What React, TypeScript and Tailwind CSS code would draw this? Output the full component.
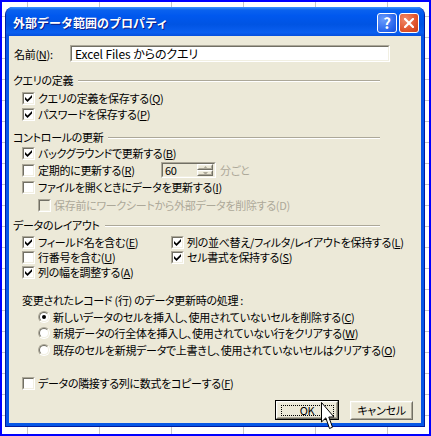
import React from 'react'

const sunkenOuter = 'border border-t-[#aca899] border-l-[#aca899] border-b-white border-r-white'
const sunkenInner = 'border border-t-[#716f64] border-l-[#716f64] border-b-[#f1efe2] border-r-[#f1efe2]'
const raisedOuter = 'border border-t-white border-l-white border-b-[#716f64] border-r-[#716f64]'
const raisedInner = 'border border-t-[#f1efe2] border-l-[#f1efe2] border-b-[#aca899] border-r-[#aca899]'

function Mn({ c }: { c: string }) {
  return (
    <>
      (<u className="underline-offset-[1px]">{c}</u>)
    </>
  )
}

function CheckBox({ checked = false, disabled = false }: { checked?: boolean; disabled?: boolean }) {
  return (
    <span className={`inline-flex h-[13px] w-[13px] shrink-0 ${sunkenOuter}`}>
      <span
        className={`flex h-full w-full items-center justify-center ${sunkenInner} ${
          disabled ? 'bg-[#ece9d8]' : 'bg-white'
        }`}
      >
        {checked && (
          <svg width="7" height="7" viewBox="0 0 7 7">
            <polygon points="0,2 2.5,4.5 7,0 7,2.5 2.5,7 0,4.5" fill="black" />
          </svg>
        )}
      </span>
    </span>
  )
}

function Radio({ checked = false }: { checked?: boolean }) {
  return (
    <span className={`inline-flex h-[12px] w-[12px] shrink-0 rounded-full ${sunkenOuter}`}>
      <span className={`flex h-full w-full items-center justify-center rounded-full bg-white ${sunkenInner}`}>
        {checked && <span className="h-[4px] w-[4px] rounded-full bg-black" />}
      </span>
    </span>
  )
}

function CheckRow({
  label,
  checked,
  className = 'h-[16px] pl-[9px]',
}: {
  label: React.ReactNode
  checked?: boolean
  className?: string
}) {
  return (
    <div className={`flex items-center gap-[3px] ${className}`}>
      <CheckBox checked={checked} />
      <span className="whitespace-nowrap leading-[15px]">{label}</span>
    </div>
  )
}

function GroupHeader({ label, className = '' }: { label: string; className?: string }) {
  return (
    <div className={`flex h-[14px] items-center leading-[14px] ${className}`}>
      <span className="whitespace-nowrap">{label}</span>
      <div className="ml-[5px] mr-[41px] mt-[2px] h-[2px] flex-1 border-t border-b border-t-[#aca899] border-b-white" />
    </div>
  )
}

function RadioRow({ label, checked, className = '' }: { label: React.ReactNode; checked?: boolean; className?: string }) {
  return (
    <div className={`flex h-[16px] items-center gap-[3px] pl-[25px] ${className}`}>
      <Radio checked={checked} />
      <span className="whitespace-nowrap leading-[15px]">{label}</span>
    </div>
  )
}

function SpinBox() {
  return (
    <div className={`h-[16px] w-[55px] shrink-0 ${sunkenOuter}`}>
      <div className={`flex h-full w-full items-center bg-[#ece9d8] ${sunkenInner}`}>
        <span className="flex-1 pl-[2px] leading-[12px]">60</span>
        <div className="mr-[1px] flex h-[12px] w-[16px] flex-col">
          {[0, 1].map((i) => (
            <div key={i} className={`h-[6px] w-full ${raisedOuter}`}>
              <div className={`flex h-full w-full items-center justify-center ${raisedInner}`}>
                <svg width="5" height="3" viewBox="0 0 5 3">
                  <polygon points={i === 0 ? '2.5,0 5,3 0,3' : '0,0 5,0 2.5,3'} fill="#aca899" />
                </svg>
              </div>
            </div>
          ))}
        </div>
      </div>
    </div>
  )
}

function Button({ label, isDefault = false }: { label: string; isDefault?: boolean }) {
  const inner = (
    <div className={`h-full w-full ${raisedOuter}`}>
      <div className={`flex h-full w-full items-center justify-center bg-[#ece9d8] ${raisedInner}`}>
        {isDefault ? (
          <div className="flex h-[11px] w-[53px] items-center justify-center border border-dotted border-black leading-[11px]">
            {label}
          </div>
        ) : (
          <span className="whitespace-nowrap leading-[12px]">{label}</span>
        )}
      </div>
    </div>
  )
  if (isDefault) {
    return <div className="h-[20px] w-[64px] border border-black">{inner}</div>
  }
  return <div className="h-[19px] w-[63px]">{inner}</div>
}

export default function App() {
  return (
    <div className="relative h-[436px] w-[431px] overflow-hidden border-2 border-[#0000ff] bg-white text-[11px] tracking-[-0.3px] text-black font-['Noto_Sans_CJK_JP',sans-serif] [font-feature-settings:'palt'] [background-image:linear-gradient(to_right,#c6c6c6_1px,transparent_1px),linear-gradient(to_bottom,#c6c6c6_1px,transparent_1px)] [background-size:72px_100%,100%_21px] [background-position:25px_0,0_14px]">
      <div className="ml-[3px] mt-[5px] flex h-[420px] w-[420px] flex-col overflow-hidden rounded-t-[8px] border-x border-b border-[#001ca0] bg-[#0757e6]">
        {/* title bar */}
        <div className="flex h-[29px] shrink-0 items-center pl-[7px] pr-[5px] pt-[2px] bg-[linear-gradient(to_bottom,#3d95ff_0%,#0a62ef_10%,#0058ee_30%,#0054e3_60%,#0a5ff0_88%,#0550dd_100%)]">
          <span className="flex-1 text-[12px] font-bold tracking-normal text-white [font-feature-settings:normal] [text-shadow:1px_1px_0_#0a1c8a]">
            外部データ範囲のプロパティ
          </span>
          <div className="flex h-[20px] w-[20px] items-center justify-center rounded-[3px] border border-white bg-[radial-gradient(circle_at_30%_30%,#6a9cfc,#2563ec_70%,#1c4fd6)]">
            <span className="text-[15px] font-bold leading-[15px] text-white">?</span>
          </div>
          <div className="ml-[2px] flex h-[20px] w-[20px] items-center justify-center rounded-[3px] border border-white bg-[radial-gradient(circle_at_30%_30%,#f08a6a,#e0542c_60%,#c63d18)]">
            <svg width="10" height="10" viewBox="0 0 10 10">
              <path d="M1 1 L9 9 M9 1 L1 9" stroke="white" strokeWidth="2.2" strokeLinecap="square" />
            </svg>
          </div>
        </div>

        {/* body */}
        <div className="mx-[3px] mb-[3px] flex flex-1 flex-col bg-[#ece9d8] pl-[4px]">
          <div className="mt-[9px] flex h-[17px] items-center pl-[1px]">
            <span className="w-[56px] whitespace-nowrap leading-[16px]">
              名前<Mn c="N" />:
            </span>
            <div className={`h-[17px] w-[320px] ${sunkenOuter}`}>
              <div className={`flex h-full w-full items-center bg-white pl-[3px] ${sunkenInner}`}>
                <span className="text-[12px] leading-[13px] tracking-[-0.1px]">Excel Files からのクエリ</span>
              </div>
            </div>
          </div>

          <GroupHeader label="クエリの定義" className="mt-[11px]" />
          <CheckRow className="mt-[3px] h-[16px] pl-[9px]" checked label={<>クエリの定義を保存する<Mn c="Q" /></>} />
          <CheckRow checked label={<>パスワードを保存する<Mn c="P" /></>} />

          <GroupHeader label="コントロールの更新" className="mt-[8px]" />
          <CheckRow className="mt-[1px] h-[16px] pl-[9px]" checked label={<>バックグラウンドで更新する<Mn c="B" /></>} />
          <div className="mt-[1px] flex h-[16px] items-center pl-[9px]">
            <CheckBox />
            <span className="ml-[3px] w-[123px] whitespace-nowrap leading-[15px]">
              定期的に更新する<Mn c="R" />
            </span>
            <SpinBox />
            <span className="ml-[4px] leading-[15px] text-[#aca899]">分ごと</span>
          </div>
          <CheckRow className="mt-[1px] h-[16px] pl-[9px]" label={<>ファイルを開くときにデータを更新する<Mn c="I" /></>} />
          <div className="mt-[2px] flex h-[16px] items-center gap-[3px] pl-[25px]">
            <CheckBox disabled />
            <span className="whitespace-nowrap leading-[15px] text-[#aca899]">
              保存前にワークシートから外部データを削除する(D)
            </span>
          </div>

          <GroupHeader label="データのレイアウト" className="mt-[5px]" />
          <div className="mt-[3px] grid grid-cols-[149px_1fr] grid-rows-[15px_15px_15px] pl-[9px]">
            <CheckRow className="h-[15px]" checked label={<>フィールド名を含む<Mn c="E" /></>} />
            <CheckRow className="h-[15px]" checked label={<>列の並べ替え/フィルタ/レイアウトを保持する<Mn c="L" /></>} />
            <CheckRow className="h-[15px]" label={<>行番号を含む<Mn c="U" /></>} />
            <CheckRow className="h-[15px]" checked label={<>セル書式を保持する<Mn c="S" /></>} />
            <CheckRow className="h-[15px]" checked label={<>列の幅を調整する<Mn c="A" /></>} />
          </div>

          <div className="mt-[12px] h-[16px] whitespace-nowrap pl-[9px] leading-[16px]">
            変更されたレコード (行) のデータ更新時の処理 :
          </div>
          <RadioRow className="mt-[1px]" checked label={<>新しいデータのセルを挿入し、使用されていないセルを削除する<Mn c="C" /></>} />
          <RadioRow label={<>新規データの行全体を挿入し、使用されていない行をクリアする<Mn c="W" /></>} />
          <RadioRow className="mt-[1px]" label={<>既存のセルを新規データで上書きし、使用されていないセルはクリアする<Mn c="O" /></>} />

          <CheckRow className="mt-[17px] h-[16px] pl-[9px]" label={<>データの隣接する列に数式をコピーする<Mn c="F" /></>} />

          <div className="mt-[9px] flex items-center justify-end gap-[11px] pr-[8px]">
            <Button label="OK" isDefault />
            <Button label="キャンセル" />
          </div>
        </div>
      </div>

      {/* mouse pointer */}
      <svg className="absolute left-[319px] top-[400px]" width="14" height="28" viewBox="0 0 14 28">
        <path
          d="M0.5 0.5 L0.5 20 L4.8 15.8 L8.5 26.5 L11.5 25.2 L7.8 15 L13 15 Z"
          fill="white"
          stroke="black"
          strokeWidth="1"
          strokeLinejoin="miter"
        />
      </svg>
    </div>
  )
}
